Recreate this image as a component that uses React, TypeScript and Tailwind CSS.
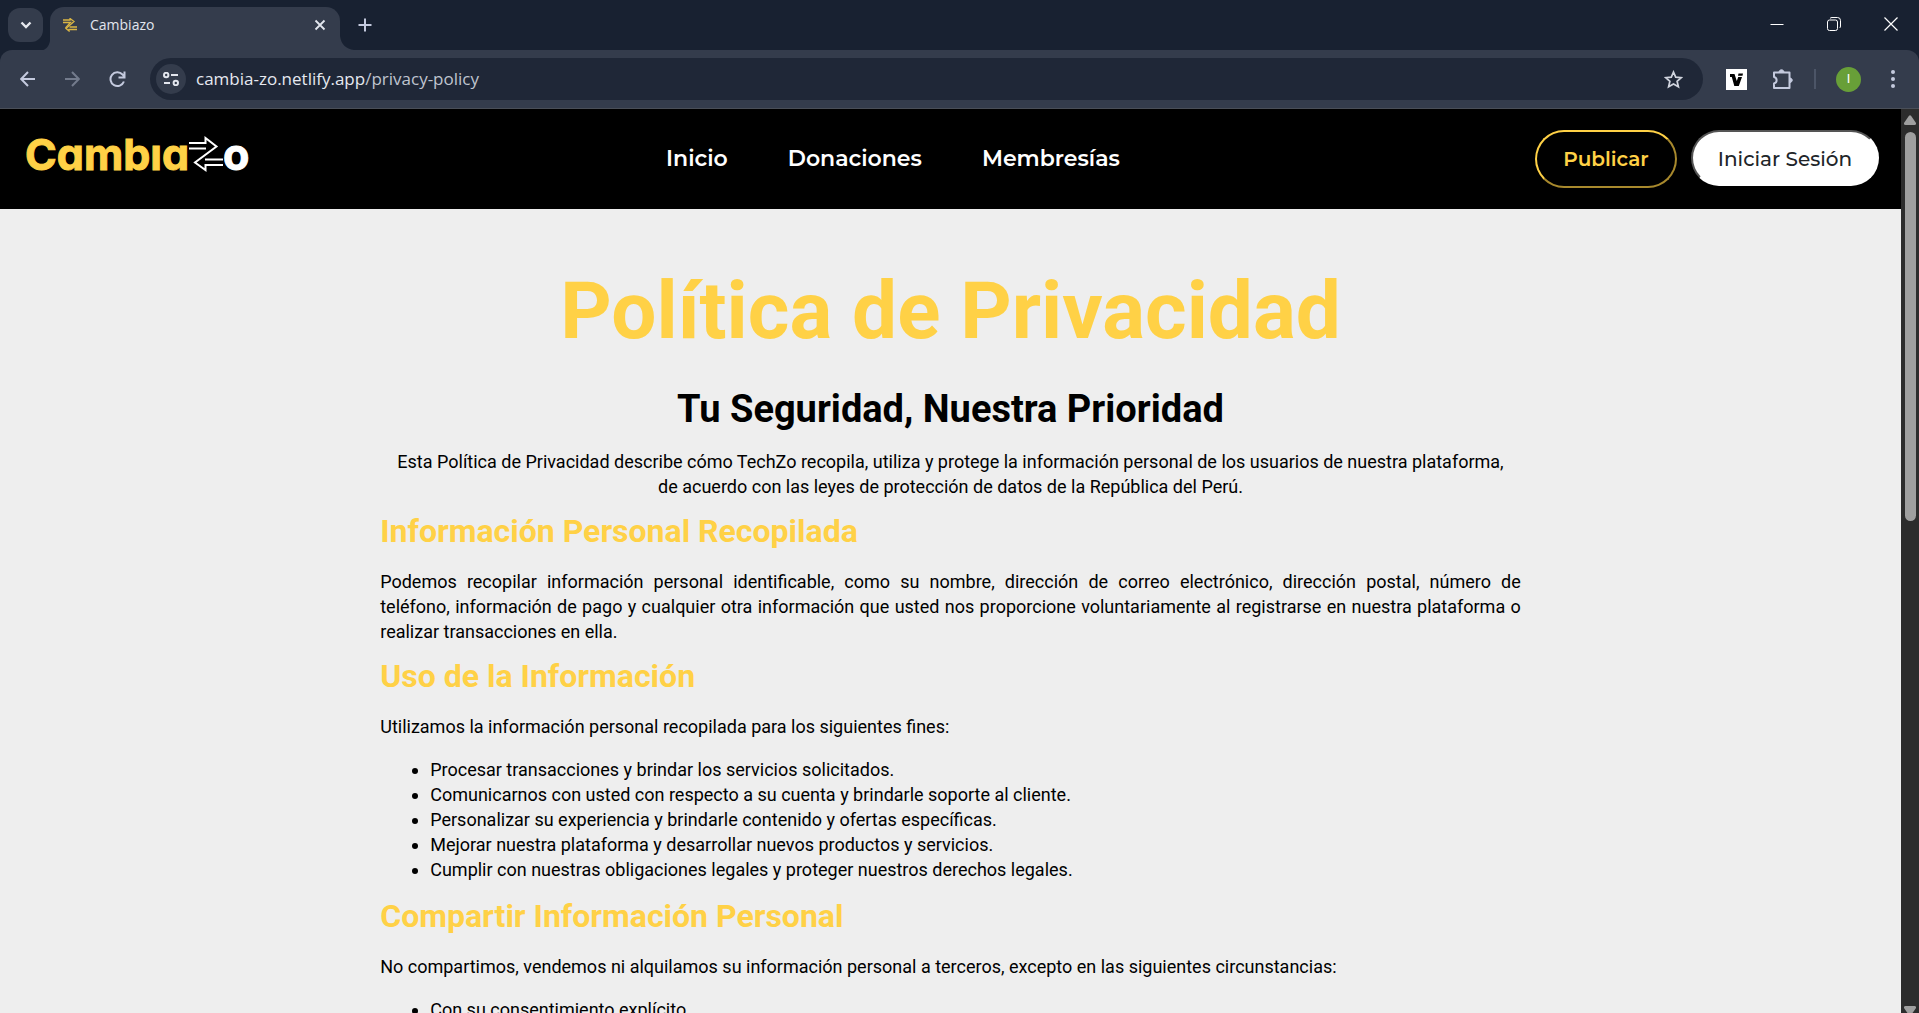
import type { ReactNode } from "react";

function LogoArrows() {
  return (
    <svg className="h-9 w-[34px] shrink-0 text-white" viewBox="0 0 34 36" fill="none" stroke="currentColor" strokeWidth="2" aria-hidden="true">
      <path d="M0 7H16.500V2L27.500 10.500L6 26.500L16.500 34V29H34" />
      <path d="M0 12.500H17M34 23.500H16" />
    </svg>
  );
}

function TabStrip() {
  return (
    <div className="flex h-[50px] bg-[#182131]">
      <button aria-label="Buscar pestañas" className="ml-2 mt-2 flex h-[34px] w-[35px] items-center justify-center rounded-xl bg-[#343c4c] text-[#e6e8ee]">
        <svg width="12" height="8" viewBox="0 0 12 8" fill="none" stroke="currentColor" strokeWidth="2.400"><path d="M1.500 1.500L6 6L10.500 1.500" /></svg>
      </button>
      <svg className="mt-auto" width="7" height="14" viewBox="0 0 7 14" aria-hidden="true"><path d="M7 5C6 10 3 13.500 0 14H7Z" fill="#343c4c" /></svg>
      <div className="flex h-[43px] w-[290px] items-center self-end rounded-t-[14px] bg-[#343c4c] pb-2 pl-[13px] pr-3 text-[#e3e6ee]">
        <svg className="text-[#d9b544]" width="14" height="14" viewBox="0 0 14 14" fill="none" stroke="currentColor" strokeWidth="1.300" aria-hidden="true">
          <path d="M0 2H7V0.500L11 3.500L3 10.500L6 13V11.500H14" />
          <path d="M0 4.500H7.500L2.500 10M14 9H6.500" />
        </svg>
        <span className="ml-[13px] font-['Open_Sans','Noto_Sans',sans-serif] text-[14px]">Cambiazo</span>
        <button aria-label="Cerrar pestaña" className="ml-auto flex size-4 items-center justify-center">
          <svg width="12" height="12" viewBox="0 0 12 12" stroke="currentColor" strokeWidth="1.800"><path d="M1.500 1.500L10.500 10.500M10.500 1.500L1.500 10.500" /></svg>
        </button>
      </div>
      <svg className="mt-auto" width="14" height="14" viewBox="0 0 14 14" aria-hidden="true"><path d="M0 0C1 8 6 13 14 14H0Z" fill="#343c4c" /></svg>
      <button aria-label="Nueva pestaña" className="ml-[3px] mt-[17px] flex size-4 items-center justify-center text-[#c4cade]">
        <svg width="14" height="14" viewBox="0 0 14 14" stroke="currentColor" strokeWidth="2"><path d="M7 0.500V13.500M0.500 7H13.500" /></svg>
      </button>
      <div className="ml-auto mr-[21px] flex h-[48px] items-center gap-[43px] text-white">
        <button aria-label="Minimizar"><svg width="14" height="14" viewBox="0 0 14 14" stroke="currentColor"><path d="M0.500 7.500H13.500" /></svg></button>
        <button aria-label="Restaurar">
          <svg width="14" height="14" viewBox="0 0 14 14" fill="none" stroke="currentColor">
            <rect x="0.500" y="3" width="10" height="10.500" rx="2" />
            <path d="M3 1.500C3.500 0.800 4 0.500 5 0.500H10.500Q13.500 0.500 13.500 3.500V9Q13.500 10.500 12.500 11" />
          </svg>
        </button>
        <button aria-label="Cerrar"><svg width="14" height="14" viewBox="0 0 14 14" stroke="currentColor" strokeWidth="1.200"><path d="M0.500 0.500L13.500 13.500M13.500 0.500L0.500 13.500" /></svg></button>
      </div>
    </div>
  );
}

function Toolbar() {
  return (
    <div className="bg-[#182131]">
      <div className="flex h-[59px] items-center rounded-t-[12px] border-b border-[#4a4f58] bg-[#343c4c] text-[#c4cade]">
        <button aria-label="Atrás" className="ml-5">
          <svg width="16" height="16" viewBox="0 0 16 16" fill="none" stroke="currentColor" strokeWidth="2"><path d="M15 8H1.500M8 1L1.200 8L8 15" /></svg>
        </button>
        <button aria-label="Adelante" className="ml-7 text-[#737b8c]">
          <svg width="16" height="16" viewBox="0 0 16 16" fill="none" stroke="currentColor" strokeWidth="2"><path d="M1 8H14.500M8 1L14.800 8L8 15" /></svg>
        </button>
        <button aria-label="Volver a cargar" className="ml-[29px]">
          <svg width="17" height="17" viewBox="0 0 17 17" fill="none" stroke="currentColor" strokeWidth="2"><path d="M14.900 10.500A6.900 6.900 0 1 1 13.500 3.500L15 5.500M15.500 0.500V6.500H9.500" /></svg>
        </button>
        <div className="ml-6 flex h-[42px] flex-1 items-center rounded-full bg-[#1f2737] pl-1.5 pr-5">
          <button aria-label="Información del sitio" className="flex size-[30px] shrink-0 items-center justify-center rounded-full bg-[#343c4c] text-[#e3e6ee]">
            <svg width="16" height="14" viewBox="0 0 16 14" fill="none" stroke="currentColor" strokeWidth="2"><circle cx="3.200" cy="3" r="2.200" /><path d="M8 3H15M1 11H7" /><circle cx="12.800" cy="11" r="2.200" /></svg>
          </button>
          <div className="relative ml-2.5 flex-1 font-['Open_Sans','Noto_Sans',sans-serif] text-[17px] leading-7">
            <input aria-label="Dirección" defaultValue="cambia-zo.netlify.app/privacy-policy" className="absolute inset-0 w-full bg-transparent text-transparent caret-white outline-none" />
            <span className="pointer-events-none text-[#e6e9f0]">cambia-zo.netlify.app<span className="text-[#bfc4cf]">/privacy-policy</span></span>
          </div>
          <button aria-label="Añadir a marcadores" className="text-[#d0d4de]">
            <svg width="19" height="19" viewBox="0 0 19 19" fill="none" stroke="currentColor" strokeWidth="1.700"><path d="M9.500 2L11.700 7.100L17.300 7.600L13.100 11.300L14.400 16.800L9.500 13.900L4.600 16.800L5.900 11.300L1.700 7.600L7.300 7.100Z" /></svg>
          </button>
        </div>
        <button aria-label="Extensión V" className="ml-[23px]">
          <svg width="21" height="21" viewBox="0 0 21 21"><rect width="21" height="21" fill="#fff" /><path d="M4 5H8.500L10.800 12L12.200 8H16L12.800 17H8.300L5.800 8H4ZM12.500 4.500H17L16.500 6.800H12Z" fill="#000" /></svg>
        </button>
        <button aria-label="Extensiones" className="ml-[25px]">
          <svg width="21" height="21" viewBox="0 0 21 21" fill="none" stroke="currentColor" strokeWidth="2" strokeLinejoin="round"><path d="M2 3.500H17.500V19H2V14.500C5.500 13.500 5.500 9 2 8Z" /><path d="M7 3C7.500 0 11.500 0 12 3ZM18 9C21 9.500 21 13 18 13.500Z" fill="currentColor" strokeWidth="1" /></svg>
        </button>
        <div className="ml-[21px] h-5 w-0.5 bg-[#4c5567]" />
        <button aria-label="Perfil" className="ml-5 flex size-[25px] items-center justify-center rounded-full bg-[#689f38] font-['Roboto',sans-serif] text-[13px] text-white">I</button>
        <button aria-label="Menú" className="ml-[30px] mr-6">
          <svg width="4" height="18" viewBox="0 0 4 18" fill="currentColor"><circle cx="2" cy="2" r="2" /><circle cx="2" cy="9" r="2" /><circle cx="2" cy="16" r="2" /></svg>
        </button>
      </div>
    </div>
  );
}

function SiteHeader() {
  return (
    <header className="flex h-[100px] items-start justify-between bg-black pl-[25px] pr-[22px] font-['Montserrat','Inter',sans-serif]">
      <a href="#inicio" aria-label="Cambiazo" className="mt-5 flex w-[226px] items-center font-['Inter',sans-serif] text-[43px] leading-[50px] font-bold [-webkit-text-stroke:1px_currentColor] [font-feature-settings:'cv11']">
        <span className="text-[#ffd146]">Cambıa</span>
        <LogoArrows />
        <span className="text-white">o</span>
      </a>
      <nav className="mt-[35px] flex gap-[60px] text-[22px] leading-[30px] font-semibold text-white">
        <a href="#inicio">Inicio</a>
        <a href="#donaciones">Donaciones</a>
        <a href="#membresias">Membresías</a>
      </nav>
      <div className="mt-[21px] flex items-start gap-3.5 text-[20px]">
        <button className="h-[58px] w-[142px] rounded-full border-2 border-t-[#ffd146] border-l-[#ffd146] border-r-[#a8892d] border-b-[#a8892d] font-semibold text-[#ffd146]">Publicar</button>
        <button className="h-14 w-[188px] rounded-full border-2 border-t-[#555] border-l-[#555] border-r-white border-b-white bg-white pt-0.5 font-medium text-[#212529]">Iniciar Sesión</button>
      </div>
    </header>
  );
}

function SectionTitle({ children }: { children: ReactNode }) {
  return <h3 className="mb-[18px] text-[32px] leading-[40px] font-bold text-[#ffd146]">{children}</h3>;
}

const uses = [
  "Procesar transacciones y brindar los servicios solicitados.",
  "Comunicarnos con usted con respecto a su cuenta y brindarle soporte al cliente.",
  "Personalizar su experiencia y brindarle contenido y ofertas específicas.",
  "Mejorar nuestra plataforma y desarrollar nuevos productos y servicios.",
  "Cumplir con nuestras obligaciones legales y proteger nuestros derechos legales.",
];

function Policy() {
  return (
    <main className="mx-auto w-3/5 pt-[52px] font-['Roboto',sans-serif] text-[18px] leading-[25px] text-black">
      <h1 className="text-center text-[80px] leading-[100px] font-bold text-[#ffd146]">Política de Privacidad</h1>
      <h2 className="mt-[24px] mb-[16px] text-center text-[38px] leading-[48px] font-bold">Tu Seguridad, Nuestra Prioridad</h2>
      <p className="mb-3 text-center">Esta Política de Privacidad describe cómo TechZo recopila, utiliza y protege la información personal de los usuarios de nuestra plataforma, de{"\u00a0"}acuerdo con las leyes de protección de datos de la República del Perú.</p>
      <SectionTitle>Información Personal Recopilada</SectionTitle>
      <p className="mb-3 text-justify">Podemos recopilar información personal identificable, como su nombre, dirección de correo electrónico, dirección postal, número de teléfono,{"\u00a0"}información de pago y cualquier otra información que usted nos proporcione voluntariamente al registrarse en nuestra plataforma o realizar{"\u00a0"}transacciones en ella.</p>
      <SectionTitle>Uso de la Información</SectionTitle>
      <p className="mb-[18px]">Utilizamos la información personal recopilada para los siguientes fines:</p>
      <ul className="mb-[14px] list-disc pl-[50px]">
        {uses.map((u) => <li key={u}>{u}</li>)}
      </ul>
      <SectionTitle>Compartir Información Personal</SectionTitle>
      <p className="mb-[18px]">No compartimos, vendemos ni alquilamos su información personal a terceros, excepto en las siguientes circunstancias:</p>
      <ul className="list-disc pl-[50px]">
        <li>Con su consentimiento explícito.</li>
      </ul>
    </main>
  );
}

function Scrollbar() {
  return (
    <div className="flex w-[18px] shrink-0 flex-col items-center bg-[#2c2c2c] pt-1.5 text-[#9f9f9f]" aria-hidden="true">
      <svg width="12" height="10" viewBox="0 0 12 10" fill="currentColor"><path d="M5 0.800Q6 -0.500 7 0.800L12 8Q12.300 10 10.500 10H1.500Q-0.300 10 0 8Z" /></svg>
      <div className="mt-[7px] h-[389px] w-[11px] rounded-full bg-[#9f9f9f]" />
      <svg className="-mb-[3px] mt-auto shrink-0" width="12" height="10" viewBox="0 0 12 10" fill="currentColor"><path d="M5 9.200Q6 10.500 7 9.200L12 2Q12.300 0 10.500 0H1.500Q-0.300 0 0 2Z" /></svg>
    </div>
  );
}

export default function App() {
  return (
    <div className="flex h-screen flex-col overflow-hidden">
      <div className="shrink-0">
        <TabStrip />
        <Toolbar />
      </div>
      <div className="flex min-h-0 flex-1">
        <div className="min-w-0 flex-1 overflow-hidden bg-[#eee]">
          <SiteHeader />
          <Policy />
        </div>
        <Scrollbar />
      </div>
    </div>
  );
}
